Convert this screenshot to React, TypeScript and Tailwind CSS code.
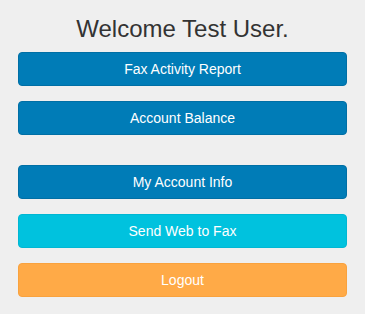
import React from 'react'

const BUTTONS = [
  { label: 'Fax Activity Report', cls: 'bg-[#007cb7] border-[#006fa5]', gap: '' },
  { label: 'Account Balance', cls: 'bg-[#007cb7] border-[#006fa5]', gap: '' },
  { label: 'My Account Info', cls: 'bg-[#007cb7] border-[#006fa5]', gap: 'mt-[15px]' },
  { label: 'Send Web to Fax', cls: 'bg-[#00c2de] border-[#00b7d3]', gap: '' },
  { label: 'Logout', cls: 'bg-[#ffaa47] border-[#f9a23e]', gap: '' },
]

export default function App() {
  return (
    <div className="w-[365px] h-[314px] bg-[#efefef] font-['Liberation_Sans',Arial,sans-serif] px-[18px] pt-[14px]">
      <h1 className="text-center text-[24px] leading-[30px] text-[#333] mb-[8px]">Welcome Test User.</h1>
      <div className="flex flex-col gap-[15px]">
        {BUTTONS.map((b) => (
          <button
            key={b.label}
            className={`h-[34px] w-full rounded-[4px] border text-white text-[14px] ${b.cls} ${b.gap}`}
          >
            {b.label}
          </button>
        ))}
      </div>
    </div>
  )
}
